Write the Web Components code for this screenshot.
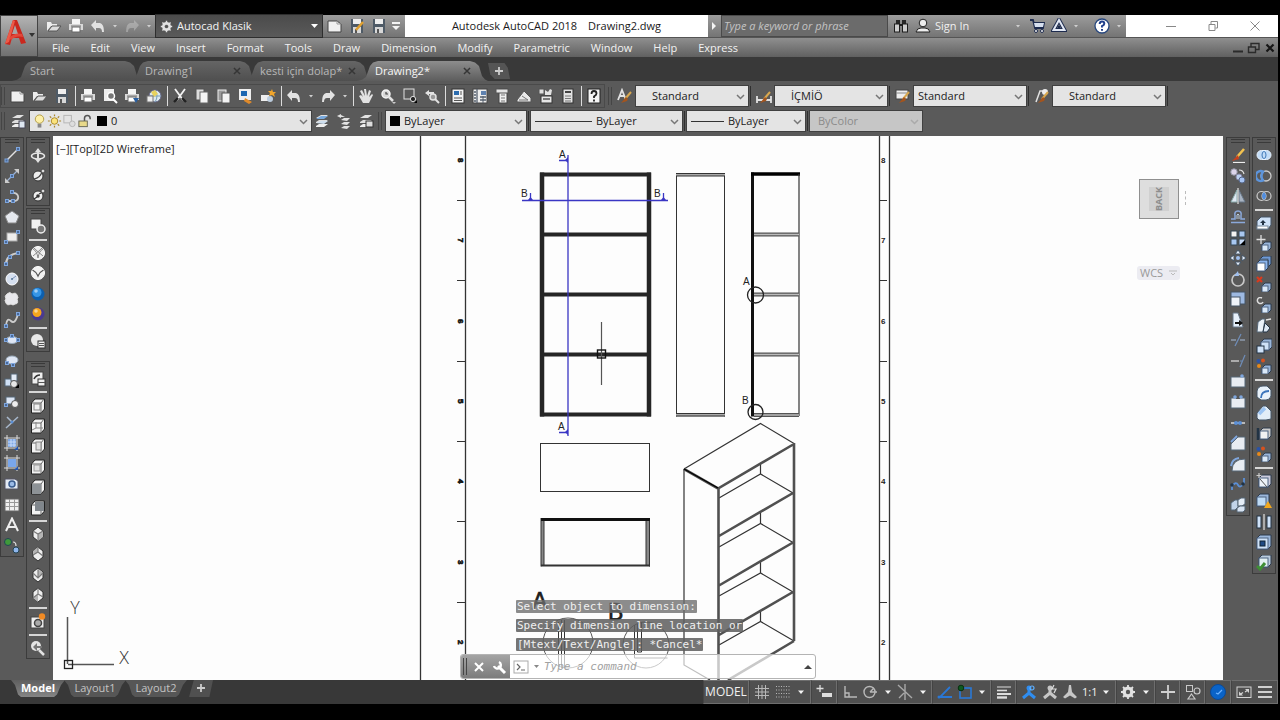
<!DOCTYPE html>
<html lang="en">
<head>
<meta charset="utf-8">
<title>Autodesk AutoCAD 2018 - Drawing2.dwg</title>
<style>
  body { margin: 0; background: #000; color: #eee; font: 11px/16px "Open Sans", "Noto Sans", sans-serif; }
</style>
</head>
<body>
<cad-app></cad-app>
<script>
/* ---------- icon artwork, all on a 16 x 16 grid ---------- */
const L = '#e2e2e2', D = '#2b2b2b';
const ln = (d, c = L, w = 1.4) => `<path d="${d}" fill="none" stroke="${c}" stroke-width="${w}"/>`;
const fl = (d, c = L, s = 'none') => `<path d="${d}" fill="${c}" stroke="${s}"/>`;
const rc = (x, y, w, h, c = L, s = 'none') => `<rect x="${x}" y="${y}" width="${w}" height="${h}" fill="${c}" stroke="${s}"/>`;
const ci = (x, y, r, c = L, s = 'none', w = 1) => `<circle cx="${x}" cy="${y}" r="${r}" fill="${c}" stroke="${s}" stroke-width="${w}"/>`;
const dot = (x, y) => rc(x - 1.5, y - 1.5, 3, 3, '#4a6a9a', '#7fa6dd');
const box = (x, y, s, front = '#dbe9f8', side = '#9ab6da') =>
  fl(`M${x} ${y + 3}l3-3h${s}v${s}l-3 3h-${s}z`, side, '#2c3a4c') + rc(x, y + 3, s, s, front, '#4c6280');
const cube = (face) => {
  const inner = { top: rc(4, 6, 6, 6, 'none', '#888'), bottom: ln('M2 12l4-2h7M6 10v-6', '#888', 1), left: rc(6, 4, 5, 8, '#ddd', '#888'), right: rc(4, 6, 6, 6, '#e0e0e0', '#999'), front: rc(2, 5, 9, 10, '#8d9296'), back: rc(5, 2, 9, 9, '#80868c') }[face];
  return fl('M1.500 5l3.500-4h9.500v10l-3.500 4h-9.500z', '#f2f2f2', '#222') + ln('M2 5h9v10M11 5l3-4', '#666', 1) + inner;
};
const iso = (n) => fl('M8 1l5 4v6l-5 4-5-4v-6z', '#ededed', '#333') + fl(['M8 8l5-3v6l-5 4z', 'M3 5l5-4v5l-5 3z', 'M8 2l5 4-5 5z', 'M3 11l5-4v8z'][n], '#b4b4b4') + ln(['M3 5l5 3 5-3M8 8v7', 'M3 9l5-3 5 4M8 6v-5', 'M3 6l5 5 5-5M8 2v9', 'M8 1v6l-5 4M8 7l5 3'][n], '#777', 1.1);
const doc = fl('M1 3h9l4 3v8h-13z', '#f0f0f0', '#444') + ln('M10 3v3h4', '#999', 1);
const printer = rc(4, 1, 8, 5, '#f5f5f5') + fl('M1 6h14v6h-14z', '#d9d9d9') + rc(4, 9, 8, 5, '#fff', '#666') + ln('M3 8h10', '#777', 1);
const disk = fl('M2 1h12v14h-12z', '#4e5a66') + rc(4, 1, 8, 5, '#eee') + rc(4, 9, 8, 6, '#d8d8d8') + rc(6, 11, 2, 4, '#555');
const folder = fl('M1 13v-9h4l1 2h5v2h-6z', '#ededed') + fl('M2 13l4-5h9l-4 5z', '#ddd', '#555');
const undo = fl('M1 7l5-5v3h4q4 1 4 9h-2q0-4-3-4h-3v3z');
const redo = fl('M15 7l-5-5v3h-4q-4 1-4 9h2q0-4 3-4h3v3z');
const layers = fl('M2 5l5-3h7l-4 3z') + fl('M2 9l3-2h9l-4 3h-8z', '#ddd') + fl('M2 13l3-2h9l-4 3h-8z', '#eee');
const brush = ln('M14 4l-6 7', '#d9a84e', 2) + fl('M9 9l-5 6 6-2 1-2z', '#a4541d');
const gear = ci(8, 8, 4, 'none', L, 3) + ln('M8 1v14M1 8h14M3 3l10 10M13 3l-10 10', L, 1.8) + ci(8, 8, 2.2, '#555');
const sphere = (c1, c2) => ci(8, 8, 6.5, c2) + ci(7, 6.5, 4.5, c1) + ci(6, 5, 1.8, '#ffffff88');
const person = (c) => ci(8, 4, 2.5, c) + ln('M8 5v5M8 9l-6 5M8 9l6 5', c, 3);
const exes = (a) => a + box(6, 7, 6);

const ICONS = {
  doc, folder, disk, printer, undo, redo, gear,
  saveas: disk + ln('M14 4l-7 8', '#e0a030', 2.5),
  preview: rc(2, 1, 10, 12, '#eee') + ci(9, 8, 3.5, '#777', '#fff', 1.5) + ln('M11 11l4 4', '#fff', 2),
  publish: printer + fl('M9 10h6l-3 5z', '#2a5fa0'),
  globe: ci(9, 8, 6, '#dce9ee', '#668') + ln('M4 8h11M9 2q4 6 0 12', '#7aa0b8', 1) + fl('M5 4l4-2 3 4-4 3z', '#e8d25c') + rc(1, 8, 6, 6, '#eee', '#777'),
  cut: ln('M3 1l8 11M13 1l-8 11', '#f3f3f3', 1.8) + ln('M2 14l4-4M14 14l-4-4', '#222', 2.4),
  copy: rc(2, 1, 8, 11, '#ddd', '#555') + rc(6, 4, 8, 11, '#f5f5f5', '#666'),
  paste: rc(2, 2, 8, 11, '#999', '#eee') + rc(6, 5, 8, 10, '#f3f3f3', '#555'),
  match: rc(1, 1, 12, 11, '#eee') + rc(3, 3, 6, 5, '#1d66b0') + fl('M7 10l7 4-3 2-5-3z', '#e08a2a'),
  blockedit: rc(1, 7, 8, 6, '#eee') + ci(10, 11, 3, '#bcd') + fl('M12 1l1 3 3 0-2 2 1 3-3-2-3 1 1-3-2-2h3z', '#f0a52c'),
  hand: fl('M5 15l-4-7 2-1 2 2-3-6 2-1 3 6-1-7 2 0 1 7 2-6 2 1-2 6 3-3 1 1-4 8z'),
  zoomrt: ci(6, 6, 4, '#d8d8d8', '#f4f4f4', 1.5) + ln('M6 4v2h2', '#444', 1.2) + ln('M9 9l4 4', L, 2.5) + fl('M12 14h4l-2 2z', '#ccc'),
  zoomwin: rc(2, 1, 10, 10, 'none', L) + ci(11, 11, 2.6, '#222', '#ddd', 1) + fl('M15 12v3h-3z', '#000'),
  zoomprev: fl('M1 5l4-3v2h5v2h-5v2z') + ci(9, 9, 3, '#999', L, 1.5) + ln('M11 11l4 4', L, 2),
  props: rc(2, 1, 12, 14, '#f2f2f2', '#333') + rc(4, 3, 5, 4, '#2c6cae') + ln('M11 3v4M4 10h8M4 12.500h8', '#555', 1),
  center: rc(1, 1, 14, 14, '#eee', '#444') + rc(9, 3, 5, 4, '#5f82b0') + ln('M5 1v14M8 9h6M8 12h6M2 4h2M2 7h2M2 10h2M2 13h2', '#56606e', 1.3) + ln('M11 8v7', '#56606e', 1),
  palettes: rc(5, 1, 8, 14, '#f0f0f0', '#444') + rc(2, 1, 12, 4, '#e4e4e4', '#555') + ln('M7 7h4M7 10h4M7 13h4', '#777', 1),
  sheets: fl('M1 12l7-9 7 7v4h-14z', '#e8e8e8', '#555') + ln('M3 12l9 0M6 8l6 4', '#777', 1),
  markup: rc(3, 8, 11, 7, '#e6e6e6', '#333') + rc(1, 1, 5, 5, '#ddd', '#555') + fl('M7 2l3 2 2-3 2 1-1 5h-6z') + ln('M5 11h7', '#555', 1.5),
  calc: rc(3, 1, 10, 14, '#e3e3e3', '#333') + ln('M5 4h6', '#444', 2) + ln('M5 8h6M5 10.500h6M5 13h6', '#777', 1.2),
  help: rc(2, 1, 12, 14, '#f4f4f4', '#222') + ln('M5.500 6q0-3 2.500-3t2.500 2.500q0 1.500-2.500 3v1.500M8 11.500v2', '#222', 1.8),
  textstyle: ln('M1 12l4-10 4 10M2.500 8h5', L, 1.8) + brush,
  dimstyle: ln('M1 8v7M15 8v7M1 12h14', L, 1.8) + brush,
  tablestyle: rc(1, 2, 12, 9, '#eee', '#444') + ln('M1 5h12', '#888', 1) + brush,
  mlstyle: ln('M2 14l4-11 5 0', L, 1.5) + ci(11, 4, 3, '#eee') + brush,
  layermgr: layers + rc(9, 8, 6, 7, '#dfe8f3', '#445'),
  layercur: layers + fl('M2 6l5-3h7l-4 3z', '#79a9dc') + fl('M2 10l5-2h7l-4 3z', '#cde'),
  layerprev: fl('M1 3l4-2v1l4 2-4 0v1z') + fl('M5 7l3-2h6l-3 3z') + fl('M5 11l3-2h6l-3 3z') + fl('M5 15l3-2h6l-3 3z'),
  layerstate: layers + rc(8, 8, 7, 6, '#ddd', '#333'),
  bulb: ci(8, 6, 4.5, '#fdf0a8', '#b09a40') + rc(6, 11, 4, 4, '#888'),
  sun: ci(8, 8, 3.5, '#fbe37c', '#a8862a') + ln('M8 1v2M8 13v2M1 8h2M13 8h2M3 3l1.500 1.500M11.500 11.500l1.500 1.500M13 3l-1.500 1.500M4.500 11.500l-1.500 1.500', '#a8862a', 1.3),
  vpfreeze: rc(2, 2, 8, 8, 'none', '#b4b4b4') + ci(11, 11, 3, '#ddd', '#b4b4b4'),
  lock: ln('M8 8v-3q0-3 3-3t3 3v1', '#555', 1.6) + rc(2, 8, 9, 6, '#e8d98a', '#665'),
  /* draw */
  line: ln('M2 14L14 2') + dot(2.5, 13.5) + dot(14, 2),
  xline: ln('M3 13L13 3', '#9fb4d4', 1.2) + fl('M1 15v-5l5 5zM15 1v5l-5-5z', '#ccc') + dot(8, 8),
  pline: ln('M3 13h8q4-1 3-5t-7-3', '#ccc', 1.8) + dot(3, 13) + dot(9, 13) + dot(8, 4),
  polygon: fl('M8 2l7 5-3 7h-8l-3-7z', '#e5e8ee', '#888'),
  rect: rc(3, 4, 10, 8, '#eee', '#aaa') + dot(2, 13) + dot(14, 3),
  arc: ln('M2 14q0-9 12-11', '#ccc', 2) + dot(2, 14) + dot(6, 7) + dot(14, 3),
  circle: ci(8, 8, 6, '#d6e0f0', '#fff') + ln('M8 8l4-3', '#7a8fb5', 1) + ci(8, 8, 1, '#579'),
  cloud: fl('M3 3q3-3 5 0 4-2 5 1 2 3 0 4 2 5-2 5-2 2-4 0-4 2-5-1-2-3 0-4-2-3 1-5z', '#e8e8ec', '#e0e0e0'),
  spline: ln('M2 13q1-8 5-4t7-7', '#ccc', 1.8) + dot(2, 14) + dot(14, 2),
  ellipse: '<ellipse cx="8" cy="8" rx="6" ry="3.500" fill="#dfe7f5" stroke="#9ab"/>' + dot(2, 8) + dot(14, 8) + dot(8, 4),
  ellarc: '<ellipse cx="8" cy="7" rx="6" ry="4" fill="#dfe7f5" stroke="#9ab"/>' + dot(3, 10) + dot(9, 12),
  insblock: rc(1, 6, 7, 7, '#cfe0f5', '#567') + rc(7, 1, 6, 7, '#e3ebf6', '#567') + ci(10, 11, 3.5, '#e8e8e8', '#555') + fl('M15 11v4h-4z', '#000'),
  mkblock: rc(2, 3, 9, 7, '#dce6f5', '#567') + ci(11, 10, 3.5, '#eee', '#555') + dot(2, 11),
  point: ln('M2 14l12-11M3 3l5 5', '#a8b8cc', 1.5) + ci(8, 8, 1.5, '#5b8fd6'),
  hatch: ln('M3 0v16M13 0v16M0 3h16M0 13h16', '#ddd', 1) + rc(4, 4, 8, 8, '#7fa8e6') + ln('M4 7h8M4 10h8M7 4v8M10 4v8', '#c8dbf8', 1) + fl('M14 11v4h-4z', '#2456b0'),
  gradient: ln('M3 0v16M13 0v16M0 3h16M0 13h16', '#ddd', 1) + rc(4, 4, 8, 8, '#79a6ea') + fl('M14 11v4h-4z', '#2456b0'),
  region: fl('M1 3h10l3 2v8h-13z', '#e4ebf5', '#556') + ci(8, 8, 3, '#9bbbe8', '#3a5c90', 1.5),
  table: rc(1, 2, 14, 12, '#f0f0f0', '#666') + ln('M1 5.500h14M1 9.500h14M5.500 2v12M10.500 2v12', '#999', 1),
  mtext: ln('M2 14l6-12.500 6 12.500M4 10h8', '#eee', 2),
  addsel: ci(4, 4, 3.5, '#3f9a3a', '#245') + ci(12, 12, 3, '#8fb6ec', '#245') + ln('M9 4q3 0 3 4', L, 1.2),
  /* orbit, visual styles */
  orbit3: '<ellipse cx="8" cy="9" rx="6.500" ry="3" fill="none" stroke="#e9e9e9" stroke-width="1.600"/>' + ln('M8 2v12', L, 2) + fl('M5 5l3-4 3 4z') + fl('M5 12l3 4 3-4z'),
  orbitf: ci(8, 9, 5, '#eee', '#333') + ln('M4 12q6-1 8-7', '#444', 1.2) + ci(13, 4, 2, '#ddd', '#444'),
  orbitc: ci(8, 9, 5, '#eee', '#333') + ci(8, 9, 1.8, '#333') + ln('M4 12l3-2M9 7l4-2', '#333', 1.2) + ci(13, 4, 2, '#ddd', '#444'),
  vs2d: rc(1, 1, 10, 10, '#f0f0f0', '#444') + ci(11, 11, 4, '#777', '#eee', 1.5),
  vswire: ci(8, 8, 6.5, '#f0f0f0', '#fff') + ln('M3 4q4 2 5 9 1-7 5-9M4 3q4 4 9 8M12 3q-4 4-9 8', '#888', 1),
  vshide: ci(8, 8, 6.5, '#f2f2f2', '#fff') + ln('M2.500 5q4 2 5.500 6 1.500-4 5.500-6', '#555', 1.3),
  vsreal: sphere('#3595e6', '#0d5fae'), vsconc: sphere('#f5a51c', '#4a3a90'),
  vsmgr: ci(7, 7, 6, '#e8e8e8') + rc(8, 8, 7, 7, '#eee', '#333') + ln('M9 10.500h5M9 12.500h5', '#555', 1),
  views: rc(2, 1, 11, 12, '#eee', '#444') + ln('M4 8q2-4 6-4', '#333', 1.6) + rc(8, 8, 7, 7, '#eee', '#333') + ln('M8 11.500h7', '#555', 1),
  ctop: cube('top'), cbot: cube('bottom'), cleft: cube('left'), cright: cube('right'), cfront: cube('front'), cback: cube('back'),
  iso0: iso(0), iso1: iso(1), iso2: iso(2), iso3: iso(3),
  camera: rc(1, 4, 13, 11, '#eee', '#444') + ci(8, 10, 3.5, '#aaa', '#444', 1.5) + ci(12, 3.5, 3.2, '#f08a24'),
  viewprev: ci(6, 6, 5, '#e4e4e4') + fl('M3 7l4-4v3h5v2h-5v3z', '#777') + ln('M9 10l5 5', L, 2.5),
  /* modify */
  erase: ln('M14 2l-7 8', '#f2c24f', 2.5) + fl('M8 8l-6 6 7-2z', '#c8401c') + ln('M3 15.500h12', '#eee', 1.2),
  copyobj: ci(4, 4, 3.2, '#dcd4ea', '#99a') + ci(9, 9, 3, '#bcd0f0', '#88a') + ci(12, 12, 3, '#a6c3f2', '#568') + ln('M9 2q4 0 5 4', L, 1.2),
  mirror: fl('M7 2v12h-6z', '#dfe8f3', '#8aa') + fl('M9 2v12h6z', '#a9b4c2', '#678') + ln('M8 0v16', '#fff', 1),
  offset: ln('M1 13.500h14M1 10h4v-3q-1-5 3-5t3 5v3h4', '#8ba9da', 1.5) + ln('M7 10v-4q1-2 2 0v4', '#bcd', 1),
  array: rc(1, 1, 6, 6, '#f3f3f3', '#345') + rc(9, 1, 6, 6, '#a8c7f0', '#345') + rc(1, 9, 6, 6, '#a8c7f0', '#345') + rc(9, 9, 6, 6, '#c8dcf7', '#345') + fl('M15 10v5h-5z', '#000'),
  move: fl('M8 0l3 4h-6zM8 16l3-4h-6zM0 8l4-3v6zM16 8l-4-3v6z', '#e4ecf8', '#456') + ci(8, 8, 2, '#9fbfee'),
  rotate: ci(8, 9, 6, 'none', '#c8c8c8', 1.7) + fl('M4 5l4-5 1 5z', '#9fbfee'),
  scale: rc(1, 1, 14, 12, '#9db9e2', '#456') + rc(1, 6, 9, 9, '#eef3fa', '#456'),
  stretch: fl('M3 1h5l5 14h-10z', '#e6f0fb', '#678') + fl('M5 10h4v-2l4 3-4 3v-2h-4z', '#111'),
  trim: ln('M1 8h5M10 8h5', '#a8bcd8', 1.2) + ln('M5 14l6-12', '#6f8db8', 1.2),
  extend: ln('M1 8h8', L, 1.2) + ln('M10 14l5-12', '#6f8db8', 1.2) + ln('M10 8h2', '#6f8db8', 1.2),
  breakpt: rc(1, 4, 14, 10, '#e8ecf2', '#567') + ci(12, 3, 1.8, '#7fa6dd'),
  breakk: rc(1, 4, 14, 10, '#e8ecf2', '#567') + rc(6, 2, 4, 3, '#555') + ci(5, 3, 1.8, '#7fa6dd') + ci(11, 3, 1.8, '#7fa6dd'),
  join: ln('M1 8h14', L, 1.4) + ci(6, 8, 2, '#5b8fd6') + ci(10, 8, 2, '#5b8fd6'),
  chamfer: fl('M1 15v-6l7-7h7v13z', '#e8ecf2', '#567') + ln('M1 7l6-6', '#7fa6dd', 1.8),
  fillet: fl('M2 15q0-12 13-12v12z', '#e8ecf2', '#567') + ln('M1 10q1-7 8-8', '#7fa6dd', 2),
  blend: ln('M2 14v-4q4-5 6-1t6-2v-5', '#5b8fd6', 1.8) + ci(2, 9, 1.8, '#234') + ci(13, 8, 1.8, '#234'),
  explode: fl('M1 6l4-3h3v7l-3 3h-4z', '#c2d4ea', '#567') + fl('M8 3l3-2h4v6l-3 2h-4z', '#e6eef8', '#567') + fl('M7 11l3-2h5v4l-2 2h-6z', '#d8e4f3', '#567'),
  /* solid editing */
  union: '<rect x="1" y="3.500" width="14" height="9" rx="4.500" fill="#c2dcf7" stroke="#e8f3ff"/><ellipse cx="8" cy="8" rx="2" ry="3.500" fill="none" stroke="#3f78b8"/>',
  subtract: ci(10, 8, 5, 'none', '#ccc', 1.3) + ln('M7 3.500a5 5 0 1 0 0 9q-3-4.500 0-9z', '#5c94dc', 2.4),
  intersect: ci(5.5, 8, 4.5, 'none', '#ccc', 1.2) + ci(10.5, 8, 4.5, 'none', '#ccc', 1.2) + fl('M8 4q4 4 0 8-4-4 0-8z', '#4f8de0'),
  extrudef: fl('M1 6l4-4h10v8l-3 4h-11z', '#cfe2f8', '#456') + rc(1, 11, 11, 3, '#fff', '#789') + fl('M6 10v-2h-2l3-3 3 3h-2v2z', '#234'),
  movef: exes(ln('M5 0v9M.5 4.500h9', '#ddd', 1.3)), offsetf: box(4, 0, 8, '#9fc4f0', '#6f9ad6') + box(1, 4, 8, '#fff', '#8cb6ee'),
  deletef: exes(ln('M1 1l5 5M6 1l-5 5', '#d83a1e', 2.2)), rotatef: exes(ln('M6 1a3 3 0 1 0 1 4', '#ddd', 1.5)),
  taperf: fl('M2 5l4-3 3 0-2 13h-6z', '#eaf1f8', '#567') + fl('M9 6l5 5-3 4h-4z', '#dbe6f2', '#234') + ln('M10 3l5-1', L, 1.4),
  copyf: box(5, 1, 8, '#cfe2f8') + rc(1, 8, 7, 7, '#cfe2f8', '#234'),
  colorf: exes(ci(2.5, 3, 2, '#2a53a8') + ci(7, 2.5, 2, '#d8521e') + ci(3, 8, 2, '#e88a1a')),
  fillete: fl('M1 6q1-5 6-5h4l4 4v6q-1 4-5 4h-5l-4-3z', '#e8f1fa', '#456') + ln('M5 13q0-7 8-7', '#3b74bb', 1.8),
  chamfere: fl('M1 8l6-7h3l5 5v8l-5 1h-7l-2-2z', '#e2edf8', '#456') + ln('M3 9l6-6', '#9cc4f3', 3.5),
  copye: box(4, 2, 8, '#f2f2f2', '#ccc') + ln('M2 2v12', '#234', 2.5),
  imprint: box(3, 2, 9, '#eef3f8', '#ccd') + ln('M4 6l7 8', '#555', 1) + ln('M3 0v5M.5 2.500h5', '#ccc', 1.2),
  clean: box(1, 1, 9, '#bddaf5') + fl('M12 8l4 7h-8z', '#f2a81e'),
  separate: rc(1, 2, 4, 12, '#cfe2f8', '#234') + rc(11, 2, 4, 12, '#cfe2f8', '#234') + ln('M8 0v16', '#fff', 1),
  shell: box(1, 1, 11, '#cfe2f8') + rc(4, 7, 5, 5, '#1f4a84', '#123'),
  check: box(3, 0, 9, '#e3f1f1', '#bcd') + ln('M1 11l3 3 5-6', '#3f8f35', 3),
  /* title bar */
  binoc: ln('M4 2v4M6 2v4M10 2v4M12 2v4M7 7h2', '#1c1c1c', 1.8) + rc(1.5, 6, 5, 8, '#ccc', '#1c1c1c') + rc(9.5, 6, 5, 8, '#ccc', '#1c1c1c'),
  user: ci(8, 5, 3.8, '#eee', '#222') + fl('M1 14q1-4 5-4h4q4 0 5 4z', '#eee', '#222'),
  cart: ln('M1 2h3l2 8h8l1-5h-10', '#1d2b4e', 1.8) + fl('M5 5h10l-1 4h-8z', '#d7e0f0') + ci(7, 13, 1.5, '#fff', '#1d2b4e') + ci(13, 13, 1.5, '#fff', '#1d2b4e'),
  a360: ln('M8 2l5.500 10h-11z', '#1d2b4e', 4) + ln('M8 2l5.500 10h-11z', '#e2e8f4', 2) + ci(8, 9, 1.5, '#1d2b4e'),
  helpc: ci(8, 8, 7, '#fff', '#26467e', 1.3) + ln('M5.700 6q0-2.500 2.300-2.500t2.300 2.200q0 1.300-2.300 2.500v1.300M8 11v1.800', '#1f3f8c', 2),
  min: ln('M3 8.500h10', '#888', 1), restore: ln('M4 6.500h6v6h-6zM6 6v-2.500h6.500v6.500h-2', '#888', 1), close: ln('M3.500 3.500l9 9M12.500 3.500l-9 9', '#888', 1),
  dmin: ln('M3 11.500h10', D, 2), drestore: ln('M2.500 7h7v5.500h-7zM5 6.500v-3h8v6h-3', D, 1.4), dclose: ln('M4.500 4.500l7 7M11.500 4.500l-7 7', '#161616', 2.2),
  caret: fl('M5 6.500h6l-3 3.500z', '#f4f4f4'), caretdim: fl('M6 7h4l-2 2.500z', '#d0d0d0'), caretbar: rc(4, 4, 8, 2, '#f4f4f4') + fl('M4 8h8l-4 4z', '#f4f4f4'),
  up: fl('M4 10h8l-4-4z', '#444'), play: fl('M6 4l4 4-4 4z', '#f4f4f4'),
  x: ln('M4.500 4.500l7 7M11.500 4.500l-7 7', '#363636', 1.7), plus: ln('M8 4v8M4 8h8', '#ccc', 1.8),
  /* status bar */
  grid: ln('M4.500 1v14M8 1v14M11.500 1v14M1 4.500h14M1 8h14M1 11.500h14', '#b8b8b8', 1), snap: ln('M1 2.500h14M1 6h14M1 9.500h14M1 13h14', '#b8b8b8', 1).replace('/>', ' stroke-dasharray="1 1.5"/>'),
  dynin: ln('M4 1v7M.5 4.500h7', '#ddd', 1.3) + rc(6, 9, 10, 4, '#ddd'),
  ortho: ln('M3 2v11h12M3 9h4v4', '#b8b8b8', 1.4), polar: ci(7.5, 8, 5.5, 'none', '#b8b8b8', 1.4) + ln('M8 8h7M8 8l4-4', '#b8b8b8', 1.4),
  isod: ln('M1 1l14 13M8 0v16M2 14l5-5', '#a8a8a8', 1.4), otrack: ln('M14 3l-10 10h12', '#2a78d6', 1.8) + ci(3, 13, 1.5, '#2a78d6'),
  osnap: rc(3, 4, 11, 10, 'none', '#2a78d6').replace('/>', ' stroke-width="1.6"/>') + ci(4, 4, 2.8, '#0f5a20', '#07300f'),
  lwt: ln('M1 3h14', '#ddd', 1) + ln('M1 6.500h10', '#ddd', 1.6) + ln('M1 10h14', '#ddd', 2) + ln('M1 13.500h10', '#ddd', 2.4),
  annoA: person('#2f8df0') + ci(11, 4, 2, 'none', '#5fb0ff', 1.2), annoB: person('#c6c6c6') + ln('M12 1l-2 4h4l-2 4', '#ddd', 1.2), annoC: fl('M7 1h2l1 7 5 5-2 1.500-5-3-5 3-2-1.500 5-5z', '#c6c6c6'),
  bigplus: ln('M8 1v14M1 8h14', '#d0d0d0', 1.8), isolate: rc(1.5, 1.5, 6, 6, 'none', '#c8c8c8') + ci(12, 7, 3, 'none', '#c8c8c8', 1.2) + ln('M6.500 10l3.500 5h-7z', '#c8c8c8', 1.2),
  perf: ci(8, 8, 7.5, '#0a63c8', '#0b4b98', 1) + ln('M6 9l2 1 4-4', '#6cb2ff', 1.2),
  full: rc(1, 3, 14, 10.5, 'none', '#d4d4d4') + fl('M13 5v4l-4-4zM3 11.500v-4l4 4z', '#d4d4d4') + ln('M4 10.500l3-2M12 6l-3 2', '#d4d4d4', 1.2),
  menu: ln('M1 3h14M1 8h14M1 13h14', '#d0d0d0', 1.8),
  prompt: rc(1, 2, 14, 12, '#ffffffaa', '#aaa') + ln('M4 5l3 3-3 3M8 11h4', '#666', 1.2),
  wrench: ln('M7 7l7 7', '#fff', 3) + ln('M8 3a3.500 3.500 0 1 1-5 4', '#fff', 2.4),
  cross: ln('M4 4l8 8M12 4l-8 8', '#fff', 2)
};

/* shared base: renders its template into an open shadow root */
class CadElement extends HTMLElement {
  connectedCallback() {
    if (this.shadowRoot) return;
    const t = document.createElement('template');
    t.innerHTML = `<style>*{box-sizing:border-box}${this.css()}</style>${this.html()}`;
    this.attachShadow({ mode: 'open' }).append(t.content.cloneNode(true));
  }
}
const define = (name, css, html) => customElements.define(name, class extends CadElement {
  css() { return css; }
  html() { return typeof html === 'function' ? html(this) : html; }
});

define('cad-icon', ':host{display:block;width:16px;height:16px;flex:none}svg{display:block;width:100%;height:100%}',
  (el) => `<svg viewBox="0 0 16 16" aria-hidden="true">${ICONS[el.getAttribute('name')] || ''}</svg>`);

define('tool-button', `:host{display:flex;width:22px;min-height:0;flex:none}
  :host([narrow]){width:12px} :host([dim]){opacity:.35}
  button{all:unset;flex:1;display:flex;align-items:center;justify-content:center;min-width:0;min-height:0;cursor:pointer}
  button:hover{background:#ffffff22}`,
  (el) => `<button type="button" aria-label="${el.getAttribute('icon')}"><cad-icon name="${el.getAttribute('icon')}"></cad-icon></button>`);

const tools = (list) => list.split(' ').map(n =>
  n === '|' ? '<tool-sep></tool-sep>' : n[0] === '-' ? `<tool-button narrow icon="${n.slice(1)}"></tool-button>` : `<tool-button icon="${n}"></tool-button>`).join('');

define('tool-sep', `:host{display:flex;width:4px;flex:none;justify-content:center;align-items:center;padding:2px 0}i{width:1px;height:100%;background:#dcdcdc}`, '<i></i>');
define('tool-grip', `:host{display:block;width:7px;flex:none;align-self:stretch;margin:3px 0;background:repeating-linear-gradient(90deg,#454545 0 1px,transparent 1px 3px) 1px 0/5px 100% no-repeat}`, '');

define('cad-combo', `:host{display:flex;align-items:center;height:20px;flex:none;background:#e4e4e4;box-shadow:0 0 0 1px #404040;color:#222;padding-left:4px;position:relative}
  :host([disabled]){background:#c6c6c6;color:#8b8b8b}
  :host([dark]){background:linear-gradient(#4b4b4b,#5a5a5a);color:#f4f4f4;box-shadow:0 0 0 1px #2e2e2e}
  select{appearance:none;border:0;outline:0;background:none;color:inherit;font:inherit;opacity:1;flex:1;min-width:0;height:100%;padding:0 16px 0 4px}
  option{color:#222}
  svg{position:absolute;right:3px;top:7px;width:9px;height:8px;pointer-events:none}`,
  (el) => `<slot></slot><select aria-label="${el.getAttribute('label')}" ${el.hasAttribute('disabled') ? 'disabled' : ''}><option>${el.getAttribute('value')}</option></select>
  <svg viewBox="0 0 9 8">${el.hasAttribute('dark') ? '<path d="M1 2h7l-3.500 4z" fill="#fff"/>' : `<path d="M1 2l3.500 3.500 3.500-3.500" fill="none" stroke="${el.hasAttribute('disabled') ? '#aaa' : '#777'}" stroke-width="1.5"/>`}</svg>`);

define('app-button', `:host{display:flex;width:38px;flex:none}
  button{all:unset;flex:1;display:flex;align-items:center;background:linear-gradient(#b5b5b5,#6e6e6e);box-shadow:inset 0 0 0 1px #444}
  svg{width:38px;height:38px}`,
  `<button type="button" aria-label="Application menu"><svg viewBox="0 0 38 38">
   <path d="M5 27L13 3h4l9 23-5 1-2-6h-7l-2 7z" fill="#c9281e"/><path d="M12 17l3-9 3 9z" fill="#a6a6a6"/><path d="M5 27L13 3l2 1L9 25z" fill="#ec5a48"/><path d="M9 21q6-6 13-4l1 3q-7-2-12 3z" fill="#e2483a"/>
   <path d="M29 16h6l-3 4z" fill="#333"/></svg></button>`);

define('cad-titlebar', `:host{display:flex;height:22px;background:linear-gradient(#9c9c9c,#747474);align-items:stretch}
  .qat{display:flex;padding-left:5px;width:118px;flex:none}
  .qat2{display:flex;padding-left:2px;width:83px;flex:none}
  .title{flex:1;background:#fff;color:#1a1a1a;display:flex;align-items:center;justify-content:center;gap:11px;white-space:pre;min-width:0}
  .go{display:flex;width:13px;flex:none}
  input{width:167px;flex:none;border:0;outline:1px solid #4a4a4a;outline-offset:-1px;background:#6b6b6b;color:#ddd;font:italic 11px/16px "Open Sans",sans-serif;padding:0 3px;border-radius:0}
  input::placeholder{color:#c4c4c4;opacity:1}
  .svc{display:flex;padding-left:2px;width:238px;flex:none}
  .signin{all:unset;width:78px;display:flex;align-items:center;color:#f0f0f0;padding-left:1px;box-sizing:border-box}
  .win{display:flex;width:152px;flex:none;background:#fff;justify-content:flex-end;gap:20px;padding-right:12px}
  h1{font:inherit;margin:0}`,
  `<div class="qat">${tools('folder printer undo -caretdim')}<tool-button dim icon="redo"></tool-button>${tools('-caretdim')}</div>
   <cad-combo dark label="Workspace" value="Autocad Klasik" style="width:166px;height:22px"><cad-icon name="gear" style="width:13px;height:13px"></cad-icon></cad-combo>
   <div class="qat2">${tools('doc saveas disk -caretbar')}</div>
   <h1 class="title"><span>Autodesk AutoCAD 2018</span><span>Drawing2.dwg</span></h1>
   <div class="go">${tools('-play')}</div>
   <input type="text" aria-label="Search" placeholder="Type a keyword or phrase">
   <div class="svc">${tools('binoc user')}<button class="signin" type="button">Sign In</button>${tools('-caretdim')}<span style="width:2px"></span>${tools('cart a360 -caretdim')}<span style="width:9px"></span>${tools('helpc -caretdim')}</div>
   <div class="win">${tools('min restore close')}</div>`);

define('cad-menubar', `:host{display:flex;align-items:center;height:20px;background:linear-gradient(#8f8f8f,#606060);border-top:1px solid #555;padding-left:14px}
  nav{display:flex;gap:21px;flex:1} a{color:#f2f2f2;text-decoration:none}
  .win{display:flex}.win tool-button{width:16px}`,
  `<nav>${'File Edit View Insert Format Tools Draw Dimension Modify Parametric Window Help Express'.split(' ').map(m => `<a href="#${m}">${m}</a>`).join('')}</nav>
   <div class="win">${tools('dmin drestore dclose')}</div>`);

define('file-tab', `:host{display:flex;align-items:center;width:131px;height:20px;margin-right:-16px;position:relative;flex:none;color:#b8b8b8;
    background:linear-gradient(#656565,#4f4f4f);
    clip-path:polygon(0 100%,5px 94%,9px 80%,13px 25%,16px 8%,21px 0,calc(100% - 18px) 0,calc(100% - 13px) 8%,calc(100% - 9px) 25%,calc(100% - 6px) 75%,calc(100% - 3px) 92%,100% 100%)}
  :host([active]){background:linear-gradient(#8d8d8d,#5d5d5d);color:#f6f6f6;z-index:1}
  a{flex:1;color:inherit;text-decoration:none;padding-left:18px;white-space:nowrap}
  button{all:unset;display:flex;margin-right:14px} cad-icon{width:14px;height:14px}`,
  (el) => `<a href="#tab"><slot></slot></a>${el.hasAttribute('fixed') ? '' : '<button type="button" aria-label="Close tab"><cad-icon name="x"></cad-icon></button>'}`);

define('file-tabs', `:host{display:flex;align-items:flex-end;height:24px;padding-left:12px;background:#393939}
  .add{all:unset;width:22px;height:16px;margin:0 0 2px 16px;display:flex;align-items:center;justify-content:center;background:#555;clip-path:polygon(0 0,75% 0,90% 30%,100% 100%,30% 100%,10% 70%)}`,
  `<file-tab fixed>Start</file-tab><file-tab>Drawing1</file-tab><file-tab>kesti için dolap*</file-tab><file-tab active>Drawing2*</file-tab>
   <button class="add" type="button" aria-label="New tab"><cad-icon name="plus"></cad-icon></button>`);

define('cad-toolbars', `:host{display:flex;flex-direction:column;gap:1px;background:#5a5a5a;padding:3px 0 3px}
  .row{display:flex;height:24px;align-items:stretch;flex:none}
  .row > *{align-self:stretch} cad-combo{align-self:center!important}
  .std{display:flex;box-shadow:inset 0 0 0 1px #4a4a4a}
  .gap{width:5px;flex:none;display:flex;justify-content:center}.gap::after{content:"";width:1px;background:#2f2f2f;margin:2px}
  .sw{width:10px;height:10px;background:#000;flex:none}
  .lt{height:1px;background:#333;flex:none}
  .state{display:flex}.state cad-icon{width:15px}`,
  `<div class="row">
     <div class="std"><tool-grip></tool-grip>${tools('doc folder disk | printer preview publish globe | cut copy paste match blockedit | undo -caretdim redo -caretdim | hand zoomrt zoomwin zoomprev | props center palettes sheets markup calc | help')}</div>
     <tool-grip style="margin-left:2px"></tool-grip>
     ${[['textstyle', 'Standard', 12], ['dimstyle', 'İÇMİÖ', 12], ['tablestyle', 'Standard', 0], ['mlstyle', 'Standard', 12]].map(([i, v, p]) =>
       `${tools(i)}<cad-combo label="${i}" value="${v}" style="width:112px;padding-left:${p}px"></cad-combo><span class="gap"></span>`).join('')}
   </div>
   <div class="row">
     <tool-grip></tool-grip>${tools('layermgr')}
     <cad-combo label="Layer" value="0" style="width:281px;margin-left:1px;padding-left:2px"><span class="state"><cad-icon name="bulb"></cad-icon><cad-icon name="sun"></cad-icon><cad-icon name="vpfreeze"></cad-icon><cad-icon name="lock"></cad-icon></span><span class="sw" style="margin-left:5px"></span></cad-combo>
     ${tools('layercur layerprev layerstate')}<tool-grip style="margin-right:2px"></tool-grip>
     <cad-combo label="Color" value="ByLayer" style="width:140px"><span class="sw"></span></cad-combo><span class="gap"></span>
     <cad-combo label="Linetype" value="ByLayer" style="width:151px"><span class="lt" style="width:57px"></span></cad-combo><span class="gap"></span>
     <cad-combo label="Lineweight" value="ByLayer" style="width:118px"><span class="lt" style="width:33px"></span></cad-combo><span class="gap"></span>
     <cad-combo disabled label="Plot style" value="ByColor" style="width:112px"></cad-combo>
   </div>`);

/* vertical toolbar: every button takes an equal share of the bar's height */
define('tool-palette', `:host{display:flex;flex-direction:column;align-items:center;width:24px;flex:none;box-shadow:inset 0 0 0 1px #3c3c3c;background:#595959;padding-bottom:1px}
  .grip{height:8px;width:14px;flex:none;background:repeating-linear-gradient(#3a3a3a 0 1px,transparent 1px 3px) 0 2px/100% 5px no-repeat}
  tool-button{flex:1}
  .bar{width:18px;height:2px;flex:none;margin:2px 0;background:#d6d6d6}`,
  (el) => `<span class="grip"></span>${el.getAttribute('tools').split(' ').map(n => n === '|' ? '<span class="bar"></span>' : `<tool-button icon="${n}"></tool-button>`).join('')}`);

define('tool-dock', `:host{display:flex;gap:2px;background:#5a5a5a;flex:none;padding-top:1px}`, '<slot></slot>');

define('cabinet-drawing', `:host{display:block;position:absolute;inset:0}svg{display:block;width:100%;height:100%}
  text{font-family:"Liberation Sans",Arial,sans-serif;fill:#222}
  text.axis{font-family:"Open Sans","Noto Sans",sans-serif;font-weight:300;fill:#333}`,
  () => {
    const rows = [160, 240, 321, 401, 481, 562, 642];
    const ticks = [200, 280, 361, 441, 521, 602];
    const P = (d, w = 1, c = '#333') => `<path d="${d}" fill="none" stroke="${c}" stroke-width="${w}"/>`;
    const T = (x, y, s, t, a = '') => `<text x="${x}" y="${y}" font-size="${s}" ${a}>${t}</text>`;
    return `<svg viewBox="53 136 1170 544" role="img" aria-label="Cabinet drawing sheet">
    ${P('M420.500 136v544M465.500 136v544M879.500 136v544M889.500 136v544', 1.3)}
    ${ticks.map(y => P(`M457 ${y}.5h9M879 ${y}.5h8`)).join('')}
    ${rows.map((y, i) => T(881, y + 3, 8, 8 - i, 'font-weight="bold"') + T(0, 0, 8, 8 - i, `font-weight="bold" stroke="#111" stroke-width=".6" transform="translate(458 ${y - 2}) rotate(90)"`)).join('')}
    ${P('M542 172.500v244M649 172.500v244', 4.5, '#262626')}${P('M540 174.500h111M542 234.500h107M542 294.500h107M542 354.500h107M540 414.500h111', 4, '#262626')}
    ${P('M568 155v281M522 200.500h146M559 160.500h8M559 432.500h8M530.500 193v7M663.500 193v7', 1.3, '#3a36c4')}
    <path d="M568 157v6l-3-3zM568 429v6l-3-3zM528 200l2.500-3 2.500 3zM661 200l2.500-3 2.500 3z" fill="#3a36c4"/>
    ${T(559, 158, 10, 'A')}${T(558, 430, 10, 'A')}${T(521, 197, 10, 'B')}${T(654, 197, 10, 'B')}
    ${P('M676.500 173v243.500M724.500 173v243.500')}${P('M676 174.500h49M676 415h49', 3, '#aaa')}${P('M676 173.500h49M676 176h49M676 413.500h49M676 416h49', 1)}
    ${P('M752.500 172.500v244', 3, '#111')}${P('M751 174h49', 3.5, '#000')}${P('M799 174v242', 1.2)}
    ${P('M754 234.500h45M754 294.500h45M754 354.500h45M754 415h45', 4, '#555')}${P('M754 234.500h45M754 294.500h45M754 354.500h45M754 415h45', 1.6, '#bbb')}
    <circle cx="755.500" cy="295" r="8" fill="none" stroke="#222" stroke-width="1.3"/><circle cx="755.500" cy="412" r="7.500" fill="none" stroke="#222" stroke-width="1.3"/>
    ${T(743, 285, 10, 'A')}${T(742, 404, 10, 'B')}
    <rect x="540.500" y="443.500" width="109" height="48" fill="none" stroke="#333"/>
    ${P('M542.500 519v47M647.500 519v47', 3, '#888')}${P('M541 518v48.500M544 520v46M646 520v46M649.500 518v48.500', 1)}${P('M541 519.500h109', 3, '#111')}${P('M541 565.500h109', 2)}
    ${P('M684 469L760.500 423.500L794 443.500M684 469v196l26 15M760.500 463v11M760.500 511v12.500M760.500 562v11M760.500 611v10.500', 1.2)}
    ${P('M719 498L760.500 474L793 493M719 547L760.500 523.500L793 542.500M719 596L760.500 573L793 592M719 645L760.500 621.500L794 641', 1.2)}
    ${P('M684 469L718 488.500L794 444M718.500 488v192M794 443v198M719 536L793 493M719 585.500L793 542.500M719 635L793 592M728 680L794 641', 2.6, '#505050')}
    ${P('M684 469L718 488', 1.2, '#000')}
    <circle cx="568" cy="643" r="25" fill="none" stroke="#555"/><circle cx="646" cy="645" r="23" fill="none" stroke="#555"/>
    ${P('M558.500 622v45M561.500 620v48M564.500 620v48M634.500 625v33h33M637.500 624v28h4v-30', 1)}
    ${T(532, 609, 23, 'A', 'stroke="#111" stroke-width=".6"')}${T(608, 620, 23, 'B', 'stroke="#111" stroke-width=".6"')}
    ${P('M601.500 322v63', 1.2, '#555')}<rect x="597.500" y="350" width="8" height="8" fill="none" stroke="#111" stroke-width="1.4"/>
    ${P('M67.500 617v47M68 664.500h46', 1.5, '#555')}<rect x="64.500" y="660.500" width="8" height="8" fill="none" stroke="#222" stroke-width="1.3"/>
    ${T(75, 614, 18, 'Y', 'class="axis" text-anchor="middle"')}${T(124, 664, 18, 'X', 'class="axis" text-anchor="middle"')}
    </svg>`;
  });

define('view-cube', `:host{display:flex;flex-direction:column;align-items:center;position:absolute;right:43px;top:43px;gap:47px}
  .face{all:unset;box-sizing:border-box;width:40px;height:40px;border:1px solid #8f8f8f;background:#dedede;display:flex;align-items:center;justify-content:center;color:#8d8d8d}
  .face span{writing-mode:vertical-rl;transform:rotate(180deg);background:#d0d0d0;padding:0 1px;font:bold 9px/18px "Open Sans",sans-serif}
  .wcs{all:unset;display:flex;align-items:center;height:14px;width:43px;box-sizing:border-box;padding-left:3px;background:#ececf2;color:#999;border-radius:3px}
  svg{width:10px;height:6px;margin-left:5px}
  :host::after{content:"";position:absolute;right:-6px;top:12px;height:14px;border-right:1px dashed #bbb}`,
  `<button class="face" type="button"><span>BACK</span></button>
   <button class="wcs" type="button">WCS<svg viewBox="0 0 10 6"><path d="M1 1h8M3 3l2 2 2-2" fill="none" stroke="#bbb"/></svg></button>`);

define('command-line', `:host{display:flex;flex-direction:column;align-items:flex-start;position:absolute;left:407px;width:356px;bottom:1px;font:11px/13px "DejaVu Sans Mono",monospace}
  output{display:flex;flex-direction:column;align-items:flex-start;gap:6px;margin:0 0 3px 56px}
  output span{background:#606060dd;color:#f0f0f0;padding:0 1px;border-radius:1px;white-space:pre}
  output span:first-child{background:#6c6c6cc8}
  .bar{display:flex;align-items:center;height:25px;width:100%;border:1px solid #b4b4b4;border-radius:3px;background:#ffffffb0;overflow:hidden}
  .left{display:flex;align-items:center;align-self:stretch;width:49px;background:linear-gradient(#a4a4a4,#7c7c7c);padding-left:1px}
  .left tool-grip{margin:3px 0}.left tool-button{width:20px;height:16px}
  .bar > tool-button{height:16px}
  input{all:unset;flex:1;min-width:0;font:italic 11px/16px "DejaVu Sans Mono",monospace;padding-left:2px}
  input::placeholder{color:#a2a2a2;opacity:1}
  .dd{width:10px;height:10px}`,
  `<output><span>Select object to dimension:</span><span>Specify dimension line location or</span><span>[Mtext/Text/Angle]: *Cancel*</span></output>
   <div class="bar"><div class="left"><tool-grip></tool-grip>${tools('cross wrench')}</div>${tools('prompt')}
   <svg class="dd" viewBox="0 0 10 10"><path d="M2 3h5l-2.500 3z" fill="#888"/></svg>
   <input type="text" aria-label="Command" placeholder="Type a command"><tool-button style="width:14px" icon="up"></tool-button></div>`);

define('drawing-view', `:host{display:block;position:relative;flex:1;min-width:0;background:#fdfdfd;overflow:hidden;color:#222}
  .label{position:relative;padding:5px 0 0 3px}`,
  `<cabinet-drawing></cabinet-drawing><div class="label">[−][Top][2D Wireframe]</div><view-cube></view-cube><command-line></command-line>`);

define('layout-tabs', `:host{display:flex;align-items:flex-start;padding-left:11px}
  a{color:#c4c4c4;text-decoration:none;height:17px;line-height:16px;width:62px;text-align:center;background:#565656;margin-right:-1px;
    clip-path:polygon(0 0,100% 0,calc(100% - 4px) 30%,calc(100% - 8px) 85%,calc(100% - 11px) 100%,10px 100%,7px 85%,4px 30%)}
  a.on{width:54px;background:linear-gradient(#5f5f5f,#858585);color:#fff;font-weight:bold}
  a.add{width:24px;display:flex;justify-content:center;margin-left:3px;background:#505050;clip-path:polygon(20% 0,100% 0,85% 100%,0 100%)}`,
  `<a class="on" href="#model">Model</a><a href="#l1">Layout1</a><a href="#l2">Layout2</a><a class="add" href="#new" aria-label="New layout"><cad-icon name="plus"></cad-icon></a>`);

define('status-group', `:host{display:flex;align-items:center;justify-content:space-evenly;flex:none;height:24px;border:1px solid #6e6e6e;border-left-color:#444;background:#505050;color:#f0f0f0}`, '<slot></slot>');

define('status-bar', `:host{display:flex;justify-content:space-between;height:24px;background:#383838}
  .groups{display:flex} tool-button{width:18px;height:20px} tool-button[narrow]{width:12px}
  button{all:unset;font-size:11px} .model{font-size:12px}`,
  () => {
    const g = (w, inner) => `<status-group style="width:${w}px">${inner}</status-group>`;
    return `<layout-tabs></layout-tabs><div class="groups">
    ${g(46, '<button type="button" class="model">MODEL</button>')}${g(62, tools('grid snap -caret'))}${g(26, tools('dynin'))}${g(95, tools('ortho polar -caret isod -caret'))}
    ${g(59, tools('otrack osnap -caret'))}${g(25, tools('lwt'))}${g(100, tools('annoA annoB annoC') + '<button type="button">1:1</button>' + tools('-caret'))}
    ${g(39, tools('gear -caret'))}${g(25, tools('bigplus'))}${g(25, tools('isolate'))}${g(26, tools('perf'))}${g(47, tools('full menu'))}</div>`;
  });

define('cad-app', `:host{display:flex;flex-direction:column;min-height:100vh;padding:15px 2px 16px 0;background:#000;box-sizing:border-box}
  header{display:flex}.bars{flex:1;min-width:0;display:flex;flex-direction:column}
  main{display:flex;flex:1;background:#5a5a5a}
  .stack{display:flex;flex-direction:column;gap:2px}
  .left{width:53px}.right{padding-left:3px;width:55px}`,
  `<header><app-button></app-button><div class="bars"><cad-titlebar></cad-titlebar><cad-menubar></cad-menubar></div></header>
   <file-tabs></file-tabs>
   <cad-toolbars></cad-toolbars>
   <main>
     <tool-dock class="left">
       <div class="stack"><tool-palette style="height:420px" tools="line xline pline polygon rect arc circle cloud spline ellipse ellarc insblock mkblock point hatch gradient region table mtext addsel"></tool-palette></div>
       <div class="stack"><tool-palette style="height:69px" tools="orbit3 orbitf orbitc"></tool-palette>
       <tool-palette style="height:144px" tools="vs2d | vswire vshide vsreal vsconc | vsmgr"></tool-palette>
       <tool-palette style="height:298px;margin-top:7px" tools="views | ctop cbot cleft cright cfront cback | iso0 iso1 iso2 iso3 | camera | viewprev"></tool-palette></div>
     </tool-dock>
     <drawing-view></drawing-view>
     <tool-dock class="right">
       <div class="stack"><tool-palette style="height:379px" tools="erase copyobj mirror offset array move rotate scale stretch trim extend breakpt breakk join chamfer fillet blend explode"></tool-palette></div>
       <div class="stack"><tool-palette style="height:437px" tools="union subtract intersect | extrudef movef offsetf deletef rotatef taperf copyf colorf | fillete chamfere copye colorf | imprint clean separate shell check"></tool-palette></div>
     </tool-dock>
   </main>
   <status-bar></status-bar>`);
</script>
</body>
</html>
